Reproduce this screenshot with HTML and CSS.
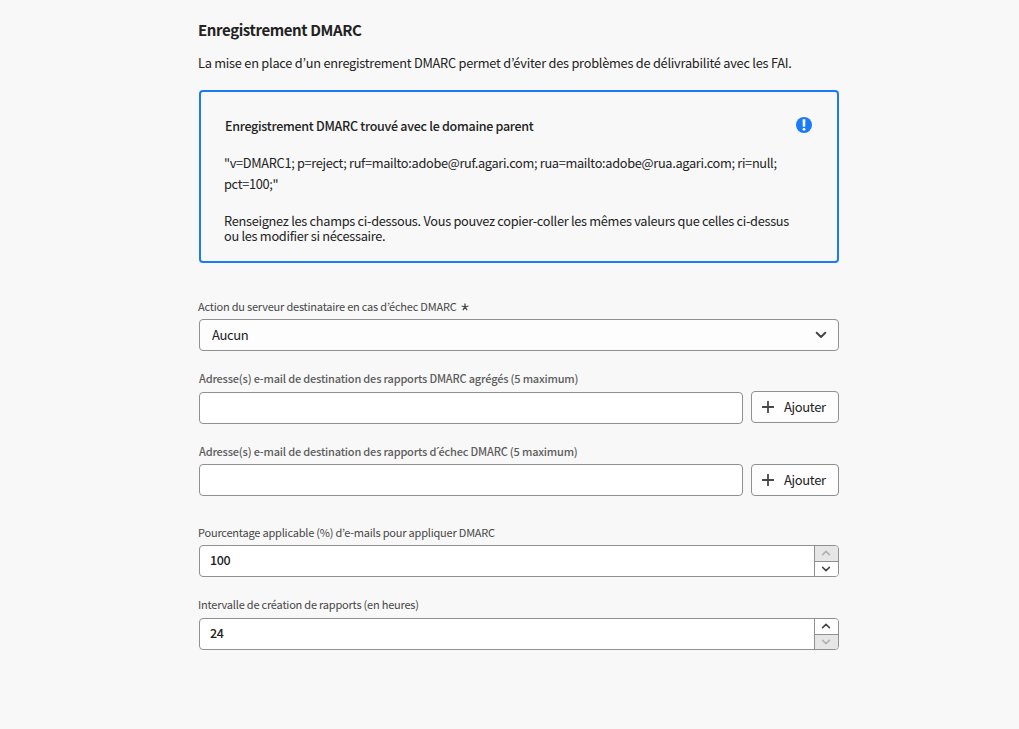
FILE: index.html
```html
<!DOCTYPE html>
<html lang="fr">
<head>
<meta charset="utf-8">
<title>Enregistrement DMARC</title>
<link rel="stylesheet" href="styles.css">
</head>
<body>
<main class="form">
  <h1 class="title">Enregistrement DMARC</h1>
  <p class="intro">La mise en place d’un enregistrement DMARC permet d’éviter des problèmes de délivrabilité avec les FAI.</p>

  <section class="alert">
    <header class="alert-head">
      <h2 class="alert-title">Enregistrement DMARC trouvé avec le domaine parent</h2>
      <svg class="alert-icon" width="16" height="16" viewBox="0 0 16 16"><circle cx="8" cy="8" r="8" fill="#1a7af8"/><path d="M6.6 2.2h2.8L9.2 9.8H6.8z" fill="#fff"/><circle cx="8" cy="12.3" r="1.4" fill="#fff"/></svg>
    </header>
    <p class="record">"v=DMARC1; p=reject; ruf=mailto:adobe@ruf.agari.com; rua=mailto:adobe@rua.agari.com; ri=null;<br>pct=100;"</p>
    <p class="hint">Renseignez les champs ci-dessous. Vous pouvez copier-coller les mêmes valeurs que celles ci-dessus<br>ou les modifier si nécessaire.</p>
  </section>

  <div class="field field-action">
    <div class="label">Action du serveur destinataire en cas d’échec DMARC<svg class="required" width="8" height="8" viewBox="0 0 8 8"><path d="M4 4V.4M4 4L.6 3M4 4L7.4 3M4 4L1.9 7.1M4 4L6.1 7.1" fill="none" stroke="#464646" stroke-width="1.3"/></svg></div>
    <div class="control select">Aucun<svg width="12" height="8" viewBox="0 0 12 8"><path d="M1.7 1.8L6 6l4.3-4.2" fill="none" stroke="#464646" stroke-width="2" stroke-linecap="round" stroke-linejoin="round"/></svg></div>
  </div>

  <div class="field field-aggregate">
    <div class="label label-bold">Adresse(s) e-mail de destination des rapports DMARC agrégés (5 maximum)</div>
    <div class="row">
      <div class="control input"></div>
      <div class="control button"><svg width="12" height="12" viewBox="0 0 12 12"><path d="M6 .5v11M.5 6h11" fill="none" stroke="#464646" stroke-width="1.8" stroke-linecap="round"/></svg>Ajouter</div>
    </div>
  </div>

  <div class="field field-failure">
    <div class="label label-bold"><span>Adresse(s) e-mail de destination des rapports d<span class="acute">´</span>échec DMARC (5 maximum)</span></div>
    <div class="row">
      <div class="control input"></div>
      <div class="control button"><svg width="12" height="12" viewBox="0 0 12 12"><path d="M6 .5v11M.5 6h11" fill="none" stroke="#464646" stroke-width="1.8" stroke-linecap="round"/></svg>Ajouter</div>
    </div>
  </div>

  <div class="field field-percent">
    <div class="label">Pourcentage applicable (%) d’e-mails pour appliquer DMARC</div>
    <div class="control number"><span class="value">100</span>
      <div class="stepper">
        <div class="step off"><svg width="10" height="6" viewBox="0 0 10 6"><path d="M1.6 4.6L5 1.4l3.4 3.2"/></svg></div>
        <div class="step"><svg width="10" height="6" viewBox="0 0 10 6"><path d="M1.6 1.4L5 4.6l3.4-3.2"/></svg></div>
      </div>
    </div>
  </div>

  <div class="field field-interval">
    <div class="label">Intervalle de création de rapports (en heures)</div>
    <div class="control number"><span class="value">24</span>
      <div class="stepper">
        <div class="step"><svg width="10" height="6" viewBox="0 0 10 6"><path d="M1.6 4.6L5 1.4l3.4 3.2"/></svg></div>
        <div class="step off"><svg width="10" height="6" viewBox="0 0 10 6"><path d="M1.6 1.4L5 4.6l3.4-3.2"/></svg></div>
      </div>
    </div>
  </div>
</main>
</body>
</html>
```
FILE: styles.css
```css
* { box-sizing: border-box; }
body {
  margin: 0;
  background: #f8f8f8;
  color: #222;
  font-family: "Noto Sans CJK KR", "Noto Sans", sans-serif;
  font-size: 13px;
}
h1, h2, p { margin: 0; white-space: nowrap; }
svg { display: block; flex: none; }
.form { width: 640px; margin-left: 199px; padding-top: 20px; }
.title { font-size: 15px; line-height: 20px; font-weight: 700; letter-spacing: -0.4px; margin-left: -1px; }
.intro { font-size: 12.75px; line-height: 20px; letter-spacing: -0.23px; margin: 13px 0 0 -1px; }

.alert {
  height: 173px;
  margin-top: 17px;
  padding: 24px 25px 0 23px;
  border: 2px solid #1a7af8;
  border-radius: 4px;
}
.alert-head { display: flex; justify-content: space-between; height: 20px; }
.alert-title { font-size: 12.5px; line-height: 20px; font-weight: 500; letter-spacing: -0.28px; margin-left: 1px; }
.alert-icon { margin-top: 1px; }
.record { font-size: 12.75px; line-height: 21px; letter-spacing: -0.31px; margin-top: 16px; }
.hint { font-size: 12.75px; line-height: 15px; letter-spacing: -0.28px; margin-top: 19px; }

.field { display: flex; flex-direction: column; }
.label { display: flex; height: 20px; line-height: 18px; font-size: 11px; letter-spacing: -0.21px; color: #464646; margin-left: -1px; white-space: nowrap; }
.label-bold { font-weight: 500; letter-spacing: -0.19px; color: #5c5c5c; margin-left: 0; }
.acute { font-family: "Noto Sans", sans-serif; line-height: 1; letter-spacing: -1px; }
.required { margin: 6px 0 0 5px; }
.field-action { margin-top: 34px; }
.field-action .control { margin-top: 2px; }
.field-aggregate { margin-top: 18px; }
.field-aggregate .row { margin-top: 2px; }
.field-aggregate .input { margin-top: 1px; }
.field-failure { margin-top: 18px; }
.field-failure .row { margin-top: 2px; }
.field-percent { margin-top: 27px; }
.field-percent .control { margin-top: 2px; }
.field-interval { margin-top: 18px; }
.field-interval .control { margin-top: 3px; }

.control {
  display: flex;
  align-items: center;
  height: 32px;
  border: 1px solid #909090;
  border-radius: 4px;
  background: #fff;
  line-height: 20px;
  letter-spacing: -0.35px;
}
.select { justify-content: space-between; padding: 0 11px 0 12px; background: #fdfdfd; }
.row { display: flex; gap: 8px; }
.input { flex: 1; }
.button { width: 88px; padding-left: 10px; gap: 10px; background: #fdfdfd; }
.number { overflow: hidden; font-size: 12.5px; font-weight: 500; }
.value { flex: 1; padding: 0 0 2px 10px; }
.stepper { display: flex; flex-direction: column; width: 24px; height: 30px; border-left: 1px solid #909090; }
.step { flex: 1; display: flex; align-items: center; justify-content: center; padding-right: 1px; background: #fff; }
.step + .step { border-top: 1px solid #909090; }
.step path { fill: none; stroke: #464646; stroke-width: 1.6; stroke-linecap: round; stroke-linejoin: round; }
.off { background: #e6e6e6; }
.off path { stroke: #b1b1b1; }
```
